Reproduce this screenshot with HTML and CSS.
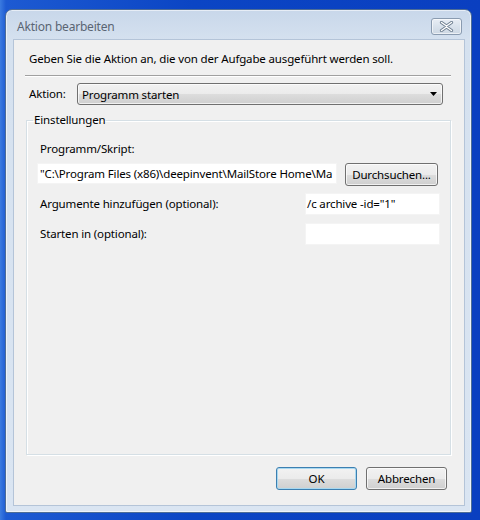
FILE: index.html
```html
<!DOCTYPE html>
<html lang="de">
<head>
<meta charset="utf-8">
<title>Aktion bearbeiten</title>
<link rel="stylesheet" href="styles.css">
</head>
<body>
<div class="window">
  <div class="titlebar">
    <span class="title">Aktion bearbeiten</span>
    <span class="close">
      <svg width="15" height="11" viewBox="0 0 15 11">
        <path d="M2.5 1.5 L7.5 5 L12.5 1.5 M2.5 9.5 L7.5 6 L12.5 9.5" fill="none" stroke="#6e7f91" stroke-width="3.2" stroke-linecap="round"/>
        <path d="M2.5 1.5 L7.5 5 L12.5 1.5 M2.5 9.5 L7.5 6 L12.5 9.5" fill="none" stroke="#ffffff" stroke-width="1.4" stroke-linecap="round"/>
      </svg>
    </span>
  </div>
  <div class="client">
    <div class="intro">Geben Sie die Aktion an, die von der Aufgabe ausgeführt werden soll.</div>
    <div class="separator"></div>
    <div class="action-row">
      <span class="label">Aktion:</span>
      <div class="combo">
        <span>Programm starten</span>
        <svg class="arrow" width="7" height="4" viewBox="0 0 7 4"><path d="M0 0 H7 L3.5 4 Z" fill="#000"/></svg>
      </div>
    </div>
    <fieldset class="group">
      <legend>Einstellungen</legend>
      <div class="group-body">
        <div class="label prog-label">Programm/Skript:</div>
        <div class="prog-row">
          <div class="field prog-field">"C:\Program Files (x86)\deepinvent\MailStore Home\Ma</div>
          <div class="btn browse">Durchsuchen...</div>
        </div>
        <div class="opt-row args-row">
          <span class="label">Argumente hinzufügen (optional):</span>
          <div class="field small-field">/c archive -id="1"</div>
        </div>
        <div class="opt-row start-row">
          <span class="label">Starten in (optional):</span>
          <div class="field small-field"></div>
        </div>
      </div>
    </fieldset>
    <div class="buttons">
      <div class="btn default">OK</div>
      <div class="btn">Abbrechen</div>
    </div>
  </div>
</div>
</body>
</html>
```

FILE: styles.css
```css
html, body {
  margin: 0;
  padding: 0;
}
body {
  width: 480px;
  height: 520px;
  overflow: hidden;
  background: linear-gradient(90deg, #3b7be0 0px, #1d5ad2 6px, #0b45c4 40%, #0a3fc0 100%);
  font-family: "Noto Sans", "Open Sans", sans-serif;
  font-size: 11.5px;
  color: #000;
}
.window {
  box-sizing: border-box;
  margin: 9px 0 0 5px;
  width: 467px;
  height: 504px;
  border: 1px solid #4d6d96;
  border-radius: 7px 7px 2px 2px;
  background: linear-gradient(180deg, #c8d7ea 0px, #d5e1ef 30px, #dae5f2 100%);
  padding: 0 6px 6px 7px;
  display: flex;
  flex-direction: column;
  box-shadow: inset 0 0 0 1px rgba(255,255,255,0.55);
}
.titlebar {
  height: 29px;
  display: flex;
  align-items: center;
  justify-content: space-between;
  flex: none;
  padding-top: 4px;
  box-sizing: border-box;
}
.title {
  color: #5a6573;
  padding-left: 4px;
  font-size: 12px;
  letter-spacing: -0.2px;
}
.close {
  box-sizing: border-box;
  width: 31px;
  height: 17px;
  margin-right: 3px;
  border: 1px solid #8a9bb0;
  border-radius: 3px;
  background: linear-gradient(180deg, #e9eef5 0%, #d9e2ec 50%, #cdd7e3 100%);
  display: flex;
  align-items: center;
  justify-content: center;
  box-shadow: inset 0 0 0 1px rgba(255,255,255,0.6);
}
.client {
  flex: 1;
  background: #f0f0f0;
  border: 1px solid #b4c4d8;
  padding: 0 13px 0 11px;
  display: flex;
  flex-direction: column;
  letter-spacing: -0.15px;
}
.intro {
  padding: 11px 0 0 4px;
  line-height: 16px;
}
.separator {
  margin-top: 8px;
  height: 1px;
  background: #a0a0a0;
  border-bottom: 1px solid #fff;
}
.action-row {
  display: flex;
  align-items: center;
  margin-top: 6px;
  padding-left: 4px;
  padding-right: 8px;
}
.action-row .label {
  width: 48px;
  flex: none;
}
.combo {
  flex: 1;
  box-sizing: border-box;
  height: 22px;
  border: 1px solid #707070;
  border-radius: 3px;
  background: linear-gradient(180deg, #f2f2f2 0%, #ebebeb 50%, #dddddd 51%, #cfcfcf 100%);
  box-shadow: inset 0 0 0 1px rgba(255,255,255,0.7);
  display: flex;
  align-items: center;
  justify-content: space-between;
  padding: 0 5px 0 4px;
}
.label {
  line-height: 16px;
}
.group {
  margin: 7px 0 0 1px;
  padding: 0;
  border: 1px solid #d5dfe5;
  box-shadow: inset 1px 1px 0 #fff, 1px 1px 0 #fff;
  min-width: 0;
  height: 343px;
  box-sizing: border-box;
}
.group legend {
  padding: 0 1px;
  margin-left: 6px;
  line-height: 16px;
}
.group-body {
  padding: 13px 12px 0 10px;
}
.prog-label {
  padding-left: 3px;
}
.prog-row {
  display: flex;
  align-items: flex-start;
  margin-top: 6px;
}
.field {
  box-sizing: border-box;
  background: #fff;
  height: 22px;
  line-height: 20px;
  white-space: nowrap;
  overflow: hidden;
  border: 1px solid #f4f4f4;
}
.prog-field {
  width: 300px;
  flex: none;
  padding-left: 2px;
  height: 21px;
}
.btn {
  box-sizing: border-box;
  height: 23px;
  border: 1px solid #707070;
  border-radius: 3px;
  background: linear-gradient(180deg, #f2f2f2 0%, #ebebeb 50%, #dddddd 51%, #cfcfcf 100%);
  box-shadow: inset 0 0 0 1px rgba(255,255,255,0.7);
  display: flex;
  align-items: center;
  justify-content: center;
  white-space: nowrap;
}
.browse {
  margin-left: 8px;
  width: 93px;
  flex: none;
}
.opt-row {
  display: flex;
  align-items: center;
  justify-content: space-between;
  padding-left: 3px;
}
.args-row {
  margin-top: 7px;
}
.start-row {
  margin-top: 8px;
}
.small-field {
  width: 135px;
  padding-left: 1px;
  margin-right: -2px;
}
.buttons {
  display: flex;
  justify-content: flex-end;
  gap: 9px;
  margin-top: 12px;
  padding-right: 4px;
}
.buttons .btn {
  width: 81px;
}
.btn.default {
  border-color: #3c7fb1;
  box-shadow: inset 0 0 0 1px #a8d8f0;
}
```
